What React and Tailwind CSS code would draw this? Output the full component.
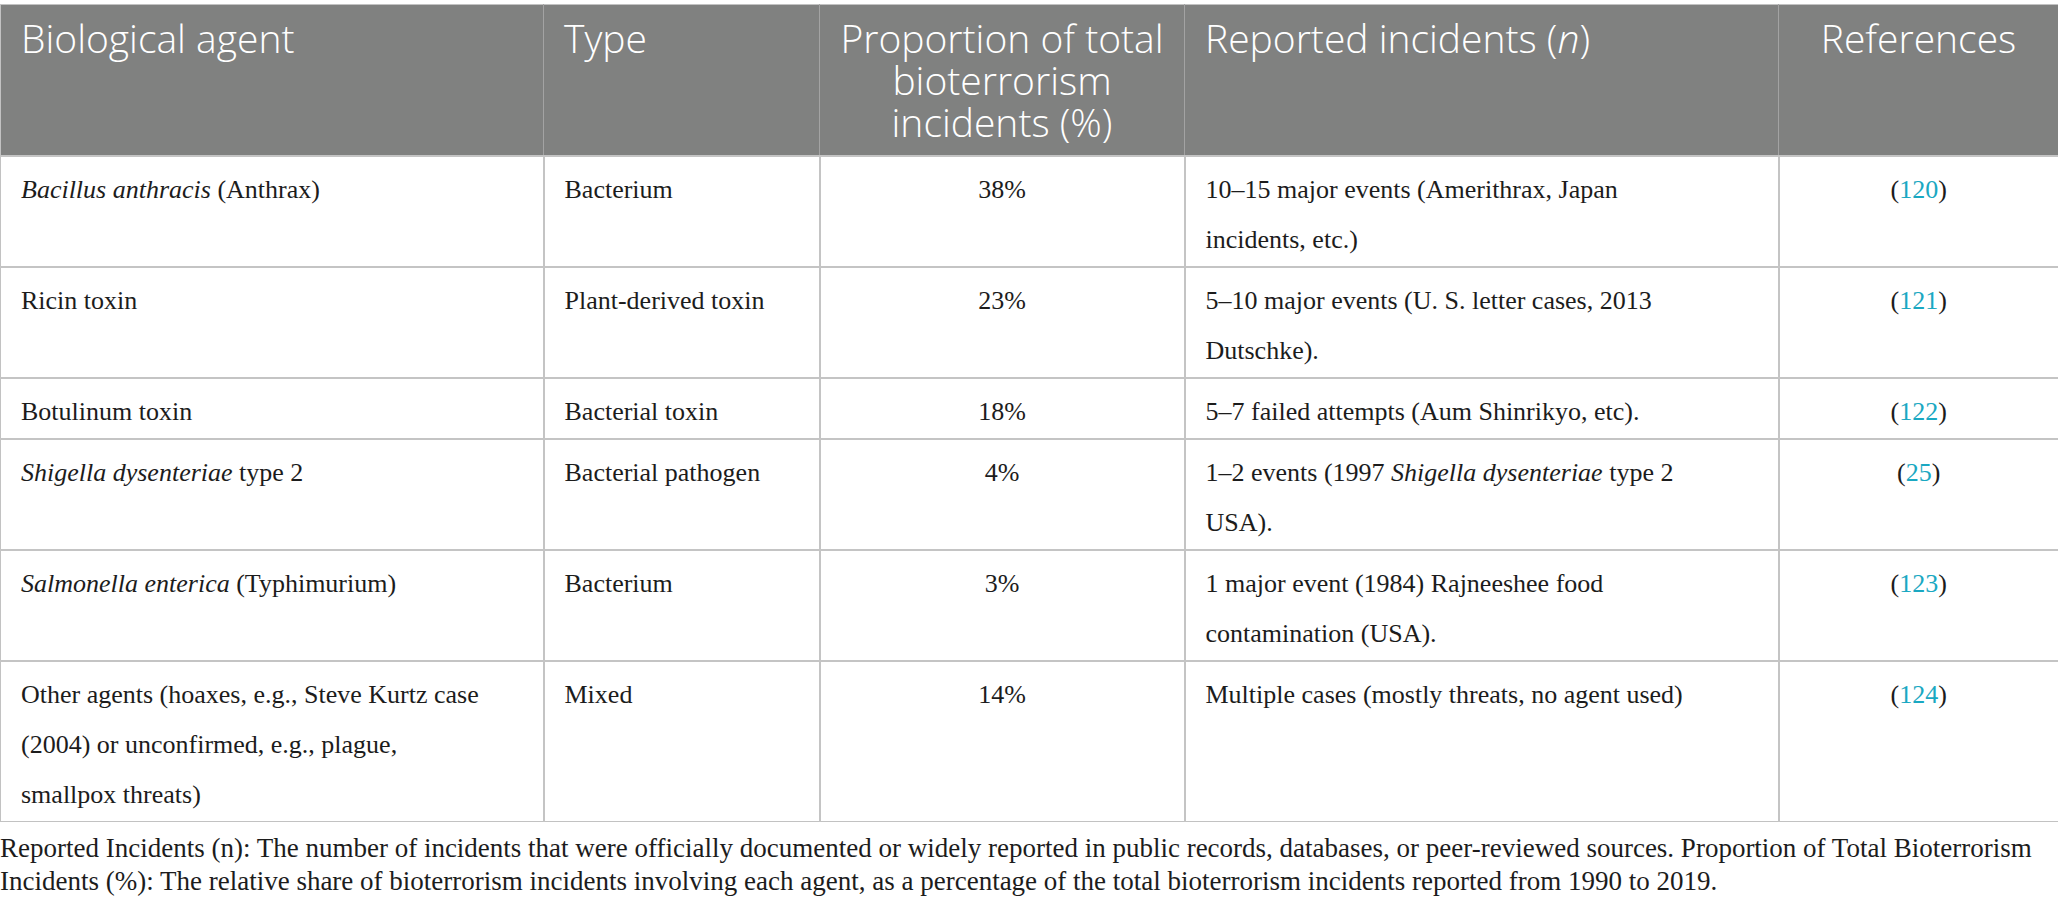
const rows = [
  {
    agent: (
      <>
        <i>Bacillus anthracis</i> (Anthrax)
      </>
    ),
    type: 'Bacterium',
    pct: '38%',
    incidents: '10–15 major events (Amerithrax, Japan incidents, etc.)',
    ref: '120',
  },
  {
    agent: 'Ricin toxin',
    type: 'Plant-derived toxin',
    pct: '23%',
    incidents: '5–10 major events (U. S. letter cases, 2013 Dutschke).',
    ref: '121',
  },
  {
    agent: 'Botulinum toxin',
    type: 'Bacterial toxin',
    pct: '18%',
    incidents: '5–7 failed attempts (Aum Shinrikyo, etc).',
    ref: '122',
  },
  {
    agent: (
      <>
        <i>Shigella dysenteriae</i> type 2
      </>
    ),
    type: 'Bacterial pathogen',
    pct: '4%',
    incidents: (
      <>
        1–2 events (1997 <i>Shigella dysenteriae</i> type 2 USA).
      </>
    ),
    ref: '25',
  },
  {
    agent: (
      <>
        <i>Salmonella enterica</i> (Typhimurium)
      </>
    ),
    type: 'Bacterium',
    pct: '3%',
    incidents: '1 major event (1984) Rajneeshee food contamination (USA).',
    ref: '123',
  },
  {
    agent: (
      <>
        Other agents (hoaxes, e.g., Steve Kurtz case (2004) or unconfirmed, e.g., plague,
        <br />
        smallpox threats)
      </>
    ),
    type: 'Mixed',
    pct: '14%',
    incidents: 'Multiple cases (mostly threats, no agent used)',
    ref: '124',
  },
];

export default function App() {
  return (
    <div className="min-h-screen bg-white pt-[4px]">
      <table className="w-[2058px] table-fixed border-collapse border border-[#c2c2c2] font-['Liberation_Serif',serif] text-[26px] leading-[50px] text-[#1c1c1c]">
        <colgroup>
          <col className="w-[543px]" />
          <col className="w-[276px]" />
          <col className="w-[365px]" />
          <col className="w-[594px]" />
          <col className="w-[280px]" />
        </colgroup>
        <thead>
          <tr className="bg-[#808180] font-['Open_Sans',sans-serif] text-[39px] font-light leading-[42px] text-white">
            <th className="border-r border-[#a3a3a3] px-[20px] pt-[12px] pb-[12px] text-left align-top font-light">
              Biological agent
            </th>
            <th className="border-r border-[#a3a3a3] px-[20px] pt-[12px] pb-[12px] text-left align-top font-light">
              Type
            </th>
            <th className="border-r border-[#a3a3a3] px-[12px] pt-[12px] pb-[12px] text-center align-top font-light">
              Proportion of total bioterrorism incidents (%)
            </th>
            <th className="border-r border-[#a3a3a3] px-[20px] pt-[12px] pb-[12px] text-left align-top font-light">
              Reported incidents (<i>n</i>)
            </th>
            <th className="px-[12px] pt-[12px] pb-[12px] text-center align-top font-light">References</th>
          </tr>
        </thead>
        <tbody>
          {rows.map((r, i) => (
            <tr key={i} className="border-t-2 border-[#c4c4c4]">
              <td className="border-r-2 border-[#c4c4c4] pl-[20px] pr-[12px] pt-[8px] pb-[1px] align-top">{r.agent}</td>
              <td className="border-r-2 border-[#c4c4c4] pl-[20px] pr-[12px] pt-[8px] pb-[1px] align-top">{r.type}</td>
              <td className="border-r-2 border-[#c4c4c4] px-[12px] pt-[8px] pb-[1px] text-center align-top">{r.pct}</td>
              <td className="border-r-2 border-[#c4c4c4] pl-[20px] pr-[74px] pt-[8px] pb-[1px] align-top">{r.incidents}</td>
              <td className="px-[12px] pt-[8px] pb-[1px] text-center align-top">
                (<span className="text-[#1aa8c2]">{r.ref}</span>)
              </td>
            </tr>
          ))}
        </tbody>
      </table>
      <p className="mt-[10px] pr-[20px] font-['Liberation_Serif',serif] text-[27px] leading-[33px] text-[#1c1c1c]">
        Reported Incidents (n): The number of incidents that were officially documented or widely reported in public
        records, databases, or peer-reviewed sources. Proportion of Total Bioterrorism Incidents (%): The relative share
        of bioterrorism incidents involving each agent, as a percentage of the total bioterrorism incidents reported
        from 1990 to 2019.
      </p>
    </div>
  );
}
